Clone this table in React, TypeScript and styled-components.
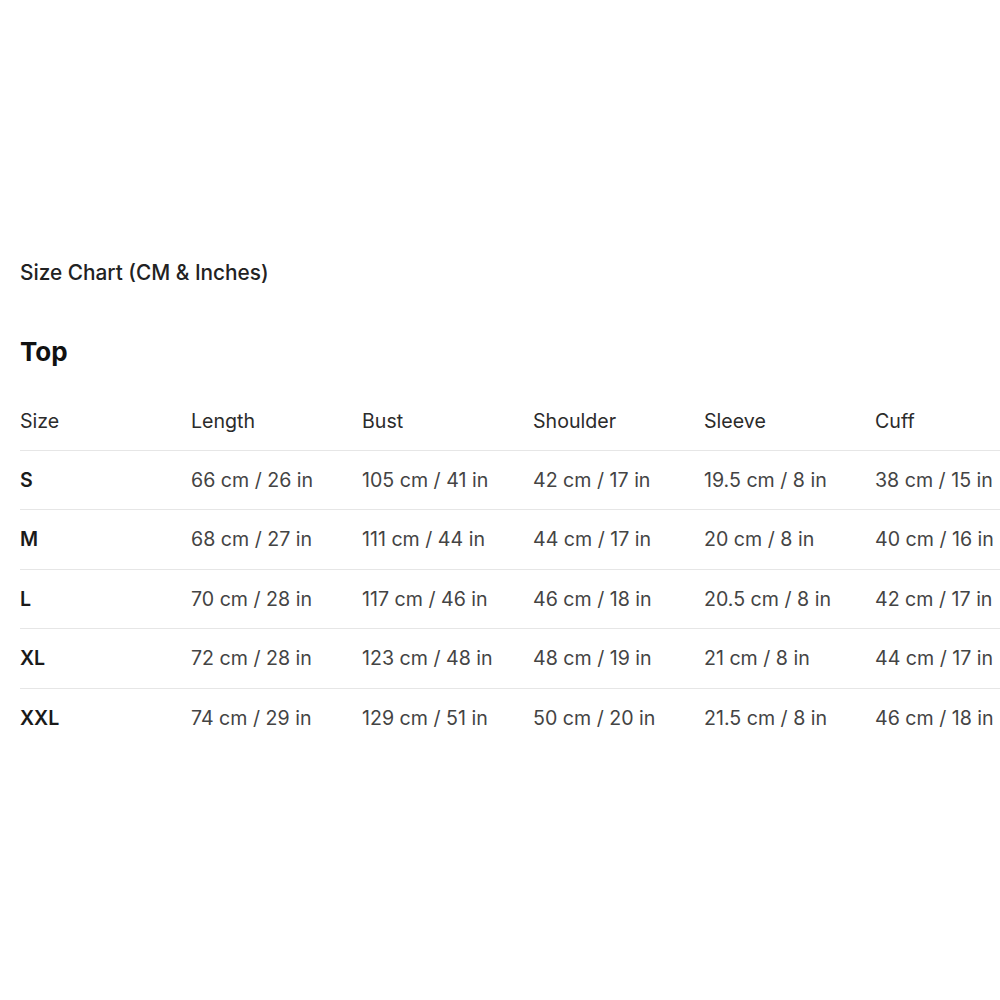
import React from "react";
import styled, { createGlobalStyle } from "styled-components";

const Global = createGlobalStyle`
  html, body { margin: 0; padding: 0; background: #fff; overflow: hidden; }
  body { font-family: Inter, "Noto Sans", sans-serif; }
`;

const Page = styled.div`
  width: 1000px;
  height: 1000px;
  overflow: hidden;
  padding: 260px 0 0 20px;
  box-sizing: border-box;
`;

const Title = styled.div`
  font-size: 20.8px;
  line-height: 26px;
  font-weight: 500;
  color: #222;
`;

const Heading = styled.h2`
  margin: 50px 0 23px;
  font-size: 26px;
  line-height: 32px;
  font-weight: 700;
  color: #111;
`;

const Table = styled.div`
  width: 1026px;
  display: flex;
  flex-direction: column;
`;

const Row = styled.div<{ $last?: boolean }>`
  display: grid;
  grid-template-columns: repeat(6, 171px);
  height: 59.5px;
  align-items: center;
  border-bottom: ${(p) => (p.$last ? "none" : "1.5px solid #e6e6e6")};
  box-sizing: border-box;
`;

const Cell = styled.div<{ $head?: boolean; $size?: boolean }>`
  font-size: 19.6px;
  line-height: 24px;
  padding-top: ${(p) => (p.$head ? "2px" : "0")};
  font-weight: ${(p) => (p.$size ? 600 : 400)};
  color: ${(p) => (p.$size ? "#1a1a1a" : p.$head ? "#2b2b2b" : "#444")};
  white-space: nowrap;
`;

const headers = ["Size", "Length", "Bust", "Shoulder", "Sleeve", "Cuff"];
const rows = [
  ["S", "66 cm / 26 in", "105 cm / 41 in", "42 cm / 17 in", "19.5 cm / 8 in", "38 cm / 15 in"],
  ["M", "68 cm / 27 in", "111 cm / 44 in", "44 cm / 17 in", "20 cm / 8 in", "40 cm / 16 in"],
  ["L", "70 cm / 28 in", "117 cm / 46 in", "46 cm / 18 in", "20.5 cm / 8 in", "42 cm / 17 in"],
  ["XL", "72 cm / 28 in", "123 cm / 48 in", "48 cm / 19 in", "21 cm / 8 in", "44 cm / 17 in"],
  ["XXL", "74 cm / 29 in", "129 cm / 51 in", "50 cm / 20 in", "21.5 cm / 8 in", "46 cm / 18 in"],
];

export default function App() {
  return (
    <>
      <Global />
      <Page>
        <Title>Size Chart (CM &amp; Inches)</Title>
        <Heading>Top</Heading>
        <Table>
          <Row>
            {headers.map((h) => (
              <Cell key={h} $head>
                {h}
              </Cell>
            ))}
          </Row>
          {rows.map((r, i) => (
            <Row key={r[0]} $last={i === rows.length - 1}>
              {r.map((c, j) => (
                <Cell key={j} $size={j === 0}>
                  {c}
                </Cell>
              ))}
            </Row>
          ))}
        </Table>
      </Page>
    </>
  );
}
